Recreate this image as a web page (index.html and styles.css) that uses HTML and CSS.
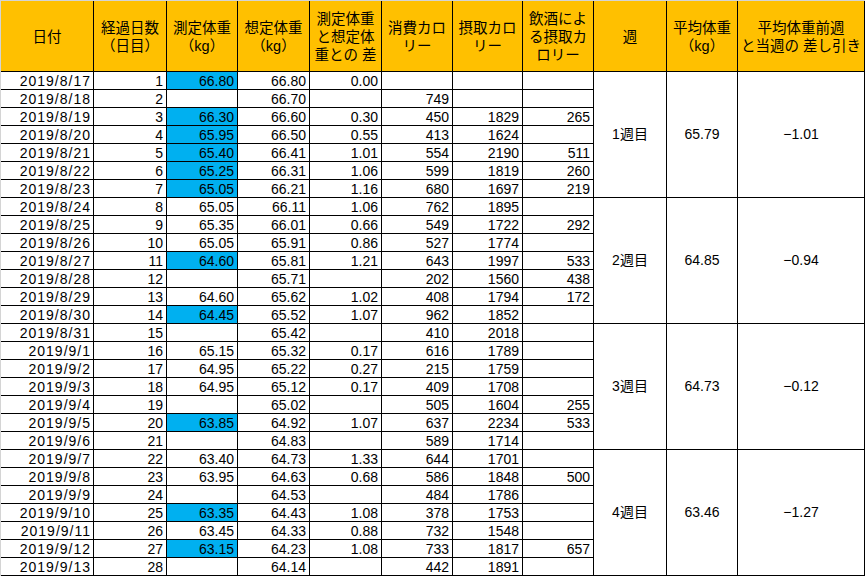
FILE: index.html
```html
<!DOCTYPE html>
<html lang="ja">
<head>
<meta charset="utf-8">
<title>体重記録</title>
<link rel="stylesheet" href="styles.css">
</head>
<body>
<table class="sheet">
<thead>
<tr class="head">
<th class="c1">日付</th>
<th class="c2">経過日数<br>（日目）</th>
<th class="c3">測定体重<br>（kg）</th>
<th class="c4">想定体重<br>（kg）</th>
<th class="c5">測定体重<br>と想定体<br>重との 差</th>
<th class="c6">消費カロ<br>リー</th>
<th class="c7">摂取カロ<br>リー</th>
<th class="c8">飲酒によ<br>る摂取カ<br>ロリー</th>
<th class="c9">週</th>
<th class="c10">平均体重<br>（kg）</th>
<th class="c11">平均体重前週<br>と当週の 差し引き</th>
</tr>
</thead>
<tbody>
<tr><td class="d">2019/8/17</td><td>1</td><td class="blue">66.80</td><td>66.80</td><td>0.00</td><td></td><td></td><td></td><td class="wk" rowspan="7">1週目</td><td class="wk" rowspan="7">65.79</td><td class="wk" rowspan="7">−1.01</td></tr>
<tr><td class="d">2019/8/18</td><td>2</td><td></td><td>66.70</td><td></td><td>749</td><td></td><td></td></tr>
<tr><td class="d">2019/8/19</td><td>3</td><td class="blue">66.30</td><td>66.60</td><td>0.30</td><td>450</td><td>1829</td><td>265</td></tr>
<tr><td class="d">2019/8/20</td><td>4</td><td class="blue">65.95</td><td>66.50</td><td>0.55</td><td>413</td><td>1624</td><td></td></tr>
<tr><td class="d">2019/8/21</td><td>5</td><td class="blue">65.40</td><td>66.41</td><td>1.01</td><td>554</td><td>2190</td><td>511</td></tr>
<tr><td class="d">2019/8/22</td><td>6</td><td class="blue">65.25</td><td>66.31</td><td>1.06</td><td>599</td><td>1819</td><td>260</td></tr>
<tr><td class="d">2019/8/23</td><td>7</td><td class="blue">65.05</td><td>66.21</td><td>1.16</td><td>680</td><td>1697</td><td>219</td></tr>
<tr><td class="d">2019/8/24</td><td>8</td><td>65.05</td><td>66.11</td><td>1.06</td><td>762</td><td>1895</td><td></td><td class="wk" rowspan="7">2週目</td><td class="wk" rowspan="7">64.85</td><td class="wk" rowspan="7">−0.94</td></tr>
<tr><td class="d">2019/8/25</td><td>9</td><td>65.35</td><td>66.01</td><td>0.66</td><td>549</td><td>1722</td><td>292</td></tr>
<tr><td class="d">2019/8/26</td><td>10</td><td>65.05</td><td>65.91</td><td>0.86</td><td>527</td><td>1774</td><td></td></tr>
<tr><td class="d">2019/8/27</td><td>11</td><td class="blue">64.60</td><td>65.81</td><td>1.21</td><td>643</td><td>1997</td><td>533</td></tr>
<tr><td class="d">2019/8/28</td><td>12</td><td></td><td>65.71</td><td></td><td>202</td><td>1560</td><td>438</td></tr>
<tr><td class="d">2019/8/29</td><td>13</td><td>64.60</td><td>65.62</td><td>1.02</td><td>408</td><td>1794</td><td>172</td></tr>
<tr><td class="d">2019/8/30</td><td>14</td><td class="blue">64.45</td><td>65.52</td><td>1.07</td><td>962</td><td>1852</td><td></td></tr>
<tr><td class="d">2019/8/31</td><td>15</td><td></td><td>65.42</td><td></td><td>410</td><td>2018</td><td></td><td class="wk" rowspan="7">3週目</td><td class="wk" rowspan="7">64.73</td><td class="wk" rowspan="7">−0.12</td></tr>
<tr><td class="d">2019/9/1</td><td>16</td><td>65.15</td><td>65.32</td><td>0.17</td><td>616</td><td>1789</td><td></td></tr>
<tr><td class="d">2019/9/2</td><td>17</td><td>64.95</td><td>65.22</td><td>0.27</td><td>215</td><td>1759</td><td></td></tr>
<tr><td class="d">2019/9/3</td><td>18</td><td>64.95</td><td>65.12</td><td>0.17</td><td>409</td><td>1708</td><td></td></tr>
<tr><td class="d">2019/9/4</td><td>19</td><td></td><td>65.02</td><td></td><td>505</td><td>1604</td><td>255</td></tr>
<tr><td class="d">2019/9/5</td><td>20</td><td class="blue">63.85</td><td>64.92</td><td>1.07</td><td>637</td><td>2234</td><td>533</td></tr>
<tr><td class="d">2019/9/6</td><td>21</td><td></td><td>64.83</td><td></td><td>589</td><td>1714</td><td></td></tr>
<tr><td class="d">2019/9/7</td><td>22</td><td>63.40</td><td>64.73</td><td>1.33</td><td>644</td><td>1701</td><td></td><td class="wk" rowspan="7">4週目</td><td class="wk" rowspan="7">63.46</td><td class="wk" rowspan="7">−1.27</td></tr>
<tr><td class="d">2019/9/8</td><td>23</td><td>63.95</td><td>64.63</td><td>0.68</td><td>586</td><td>1848</td><td>500</td></tr>
<tr><td class="d">2019/9/9</td><td>24</td><td></td><td>64.53</td><td></td><td>484</td><td>1786</td><td></td></tr>
<tr><td class="d">2019/9/10</td><td>25</td><td class="blue">63.35</td><td>64.43</td><td>1.08</td><td>378</td><td>1753</td><td></td></tr>
<tr><td class="d">2019/9/11</td><td>26</td><td>63.45</td><td>64.33</td><td>0.88</td><td>732</td><td>1548</td><td></td></tr>
<tr><td class="d">2019/9/12</td><td>27</td><td class="blue">63.15</td><td>64.23</td><td>1.08</td><td>733</td><td>1817</td><td>657</td></tr>
<tr><td class="d">2019/9/13</td><td>28</td><td></td><td>64.14</td><td></td><td>442</td><td>1891</td><td></td></tr>
</tbody>
</table>
</body>
</html>
```

FILE: styles.css
```css
html, body {
  margin: 0;
  padding: 0;
  background: #ffffff;
}

.sheet {
  box-sizing: border-box;
  width: 865px;
  table-layout: fixed;
  border-collapse: separate;
  border-spacing: 0;
  border-top: 1px solid #d4d4d4;
  border-left: 1px solid #d4d4d4;
  font-family: "Liberation Sans", "Noto Sans CJK JP", sans-serif;
  font-size: 14px;
  color: #000000;
}

.sheet th,
.sheet td {
  box-sizing: border-box;
  border-right: 1px solid #000000;
  border-bottom: 1px solid #000000;
  padding: 0;
  overflow: hidden;
  white-space: nowrap;
}

.head {
  height: 71px;
}

.head th {
  background: #ffc000;
  font-weight: normal;
  font-size: 14.5px;
  line-height: 18px;
  text-align: center;
  vertical-align: middle;
  padding-top: 2px;
}

.c1 { width: 93px; }
.c2 { width: 73px; }
.c3 { width: 71px; }
.c4 { width: 72px; }
.c5 { width: 72px; }
.c6 { width: 71px; }
.c7 { width: 70px; }
.c8 { width: 71px; }
.c9 { width: 73px; }
.c10 { width: 71px; }
.c11 { width: 127px; }

.sheet tbody tr {
  height: 18px;
}

.sheet td {
  height: 18px;
  line-height: 15px;
  padding: 2px 3px 0 0;
  text-align: right;
  vertical-align: bottom;
}

.sheet td.d {
  letter-spacing: 1px;
  padding-right: 2px;
}

.sheet td.blue {
  background: #00b0f0;
}

.sheet td.wk {
  text-align: center;
  vertical-align: middle;
  padding: 0;
}
```
